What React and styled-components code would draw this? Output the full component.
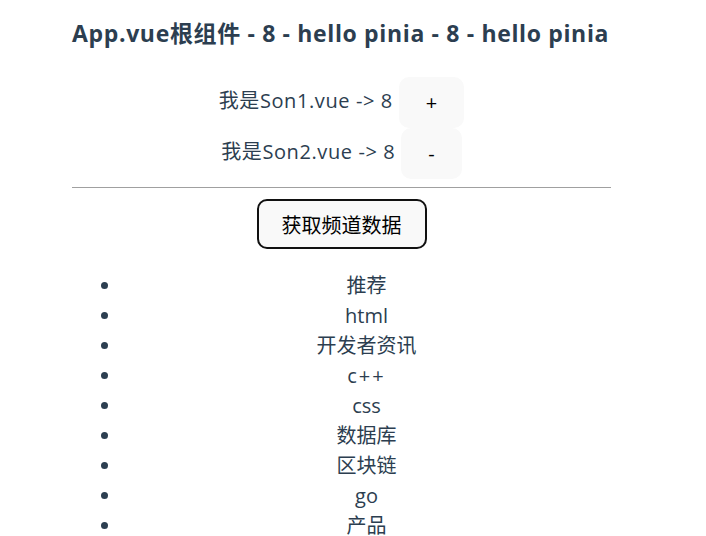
import React, { useState } from "react";
import styled, { createGlobalStyle } from "styled-components";

const GlobalStyle = createGlobalStyle`
  body {
    margin: 0;
    background: #fff;
    color: #2c3e50;
    font-family: "Open Sans", "Noto Sans CJK SC", sans-serif;
    font-size: 20px;
    line-height: 30px;
  }
`;

const Page = styled.div`
  width: 539px;
  padding: 13px 0 0 72px;
`;

const Title = styled.h3`
  margin: 0 0 24px;
  font-size: 23px;
  line-height: 40px;
  font-weight: 700;
  white-space: nowrap;
  letter-spacing: 0.65px;
`;

const SonRow = styled.div`
  text-align: center;
  height: 51px;
  letter-spacing: 0.6px;
`;

const SmallButton = styled.button`
  display: inline-block;
  vertical-align: middle;
  margin-left: 6px;
  height: 51px;
  padding: 0 26px;
  border: 1px solid transparent;
  border-radius: 10px;
  background: #f9f9f9;
  color: #000;
  font-family: "Open Sans", "Noto Sans CJK SC", sans-serif;
  font-size: 20px;
  letter-spacing: 0;
  cursor: pointer;
`;

const Rule = styled.hr`
  margin: 8px 0 11px;
  border: 0;
  border-top: 1px solid #a0a0a0;
  height: 0;
`;

const Center = styled.div`
  text-align: center;
`;

const FetchButton = styled.button`
  width: 170px;
  height: 50px;
  border: 2px solid #111;
  border-radius: 10px;
  background: #f9f9f9;
  color: #000;
  font-family: "Open Sans", "Noto Sans CJK SC", sans-serif;
  font-size: 20px;
  cursor: pointer;
`;

const List = styled.ul`
  margin: 22px 0 0;
  padding-left: 50px;
  list-style: disc;
`;

const Item = styled.li`
  text-align: center;
  line-height: 30px;
  letter-spacing: ${p => (p.$spread ? "2px" : "0")};
`;

const channels = ["推荐", "html", "开发者资讯", "c++", "css", "数据库", "区块链", "go", "产品"];

export default function App() {
  const [count, setCount] = useState(8);
  return (
    <Page>
      <GlobalStyle />
      <Title>App.vue根组件 - {count} - hello pinia - {count} - hello pinia</Title>
      <SonRow>
        我是Son1.vue -&gt; {count}
        <SmallButton onClick={() => setCount(count + 1)}>+</SmallButton>
      </SonRow>
      <SonRow>
        我是Son2.vue -&gt; {count}
        <SmallButton onClick={() => setCount(count - 1)}>-</SmallButton>
      </SonRow>
      <Rule />
      <Center>
        <FetchButton>获取频道数据</FetchButton>
      </Center>
      <List>
        {channels.map(c => (
          <Item key={c} $spread={c === "c++"}>{c}</Item>
        ))}
      </List>
    </Page>
  );
}
